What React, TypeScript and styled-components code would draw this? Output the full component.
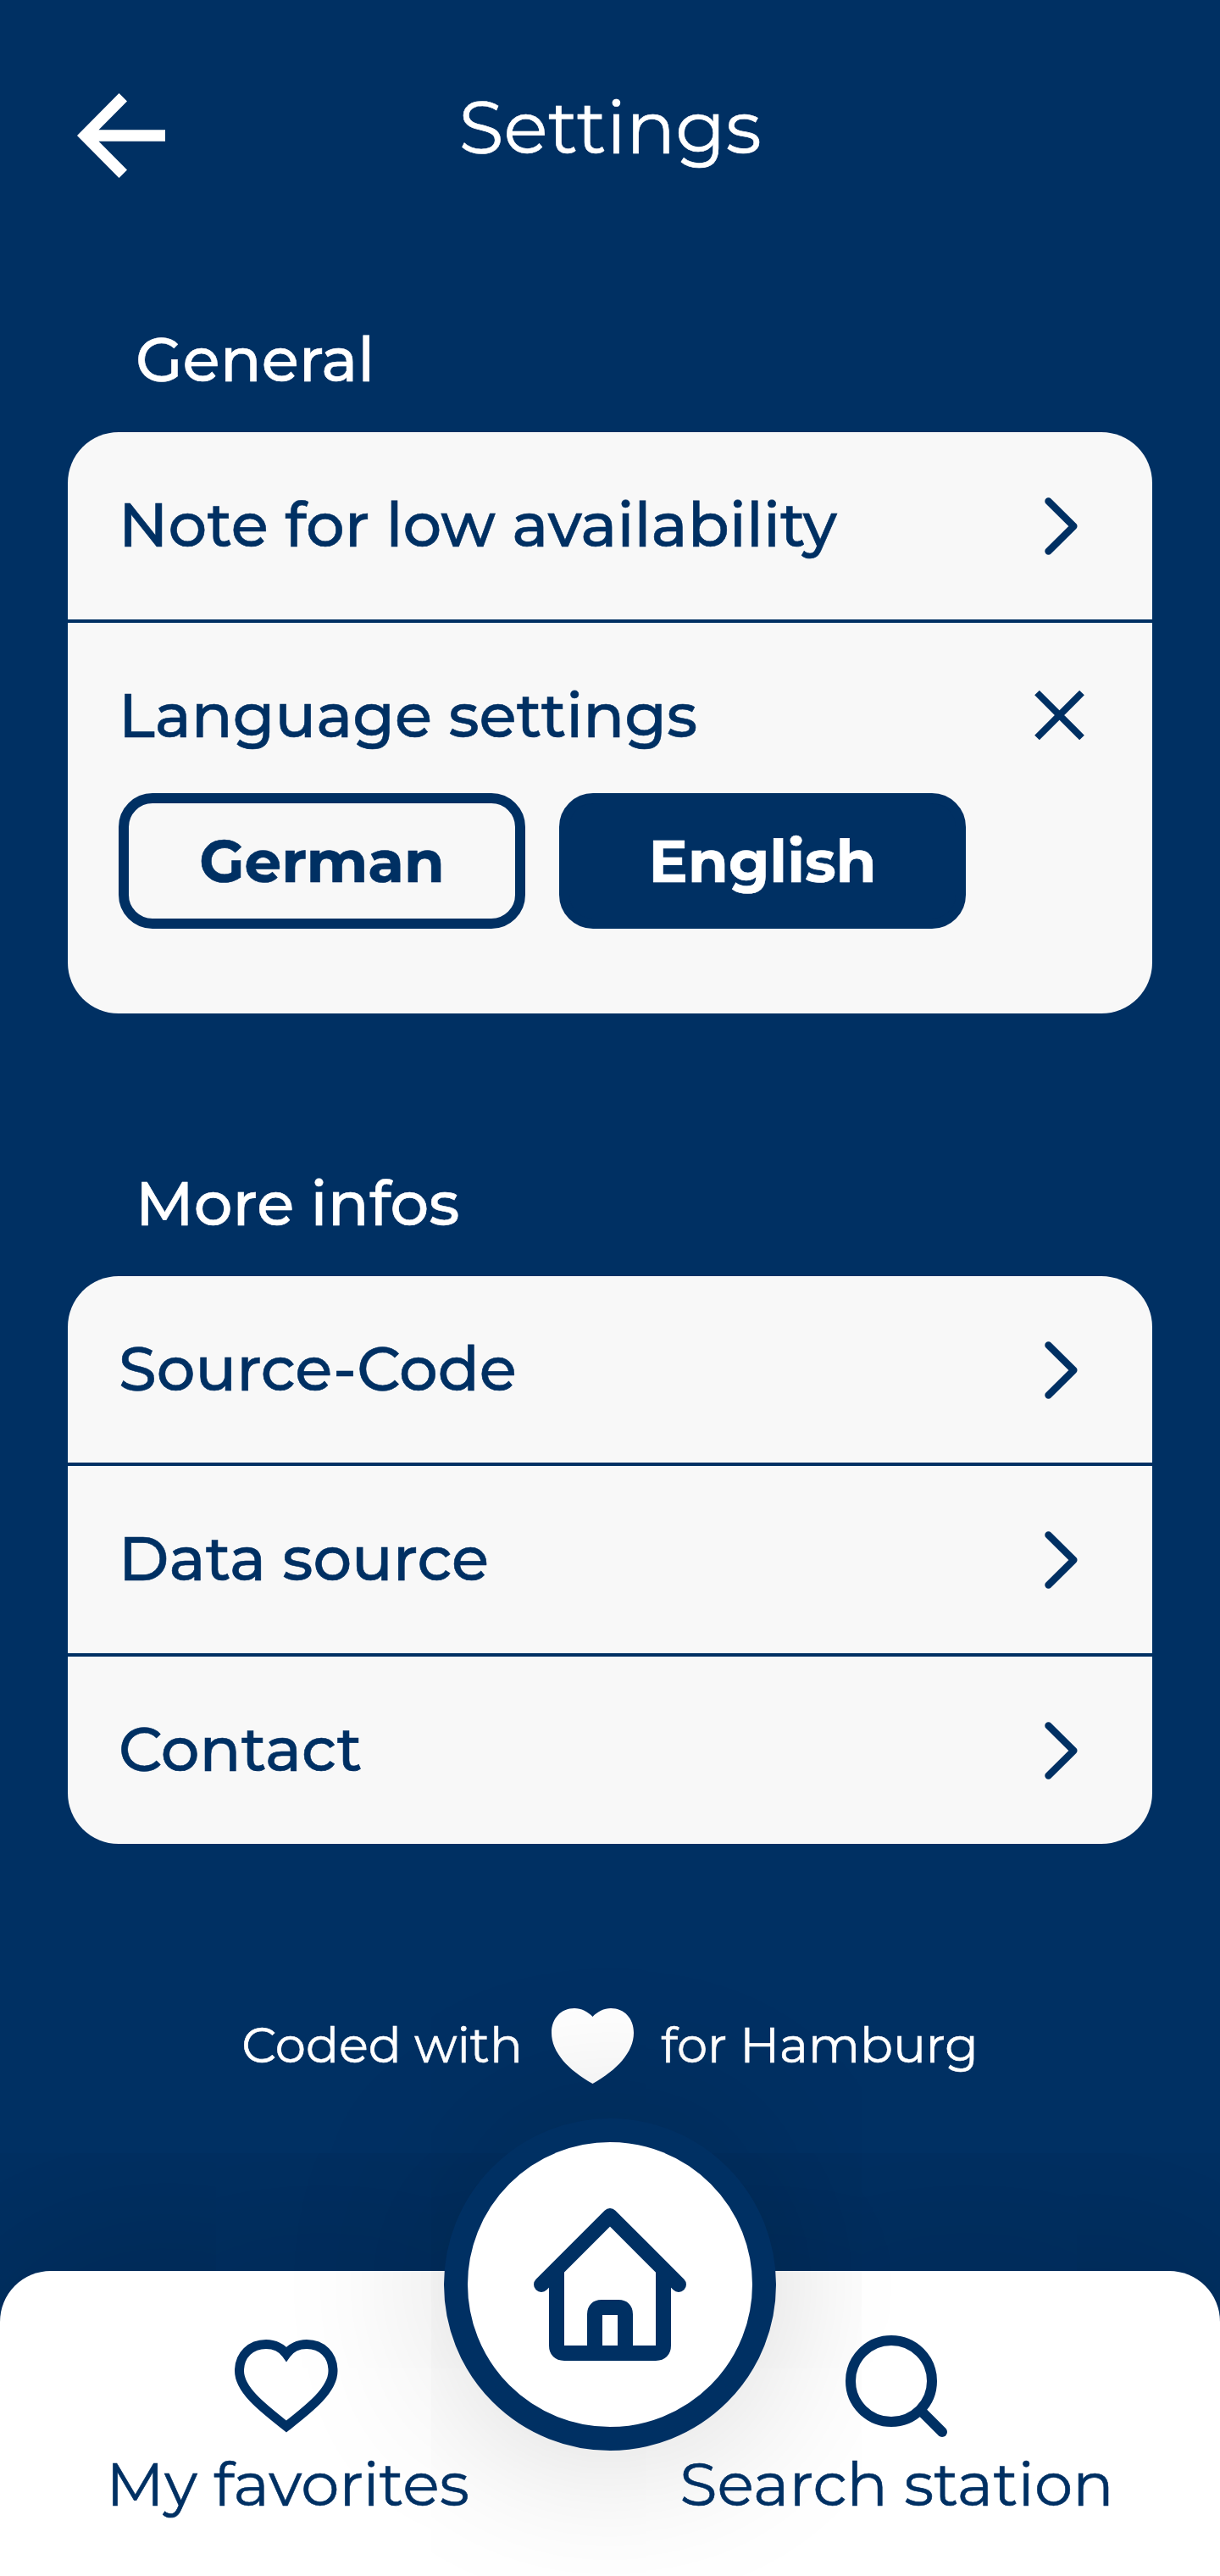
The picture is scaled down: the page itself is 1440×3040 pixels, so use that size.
import React from "react";
import styled, { createGlobalStyle } from "styled-components";

const navy = "#003063";

const GlobalStyle = createGlobalStyle`
  * { box-sizing: border-box; }
  body { margin: 0; background: ${navy}; }
  button { font: inherit; border: 0; padding: 0; margin: 0; background: none; color: inherit; cursor: pointer; }
`;

const Screen = styled.main`
  width: 1440px;
  height: 3040px;
  background: ${navy};
  color: #fff;
  font-family: "Montserrat", "Inter", "Liberation Sans", sans-serif;
  -webkit-text-stroke: 0.6px;
  display: flex;
  flex-direction: column;
  overflow: hidden;
`;

const Header = styled.header`
  height: 320px;
  padding: 0 91px;
  display: grid;
  grid-template-columns: 104px 1fr 104px;
  align-items: center;
`;

const Icon = styled.svg`
  display: block;
  flex: none;
`;

const Title = styled.h1`
  margin: -20px 0 0;
  text-align: center;
  font-size: 86.4px;
  line-height: 100px;
  font-weight: 400;
`;

const Section = styled.section<{ $gap: number }>`
  padding: 0 80px;
  margin-bottom: ${(p) => p.$gap}px;
`;

const SectionTitle = styled.h2`
  margin: 0;
  height: 190px;
  padding: 59px 0 0 80px;
  font-size: 72px;
  line-height: 90px;
  font-weight: 500;
`;

const Card = styled.div`
  background: #f8f8f8;
  color: ${navy};
  border-radius: 60px;
  overflow: hidden;
`;

const Item = styled.div<{ $divided?: boolean; $height: number }>`
  height: ${(p) => p.$height}px;
  border-bottom: ${(p) => (p.$divided ? `4px solid ${navy}` : "0")};
`;

const ItemRow = styled.button`
  width: 100%;
  height: 221px;
  padding: 0 80px 0 60px;
  display: flex;
  align-items: center;
  justify-content: space-between;
`;

const Label = styled.span`
  margin-bottom: 3px;
  font-size: 72px;
  line-height: 90px;
  font-weight: 500;
  white-space: nowrap;
`;

const CrossIcon = styled(Icon)`
  margin-bottom: 3px;
`;

const Languages = styled.div`
  display: flex;
  gap: 40px;
  padding: 0 60px;
  margin-top: -20.5px;
`;

const LanguageButton = styled.button<{ $active?: boolean }>`
  width: 480px;
  height: 160px;
  border: 12px solid ${navy};
  border-radius: 40px;
  background: ${(p) => (p.$active ? navy : "transparent")};
  color: ${(p) => (p.$active ? "#fff" : navy)};
  font-size: 69.12px;
  font-weight: 700;
  text-align: center;
`;

const Credit = styled.p`
  margin: 0;
  height: 90px;
  display: flex;
  align-items: center;
  justify-content: center;
  gap: 32px;
  font-size: 57.6px;
  line-height: 70px;
`;

const CreditText = styled.span`
  white-space: nowrap;
  margin-top: -4px;
`;

const CreditHeart = styled(Icon)`
  margin-left: 2px;
`;

const Nav = styled.nav`
  position: relative;
  margin-top: auto;
  height: 360px;
  flex: none;
  padding: 0 80px;
  display: grid;
  grid-template-columns: 1fr 1fr;
  background: #fff;
  color: ${navy};
  border-radius: 60px 60px 0 0;
  box-shadow: 0 0 300px rgba(0, 0, 0, 0.24);
`;

const NavItem = styled.button<{ $shift: number }>`
  position: relative;
  z-index: 1;
  display: flex;
  flex-direction: column;
  align-items: center;
  padding-top: 70px;
  && {
    margin-left: ${(p) => p.$shift}px;
  }
`;

const NavIcon = styled(Icon)<{ $nudge: number }>`
  margin-right: ${(p) => p.$nudge}px;
  overflow: visible;
`;

const NavLabel = styled.span`
  margin-top: 14px;
  font-size: 72px;
  line-height: 90px;
  white-space: nowrap;
`;

const HomeButton = styled.button`
  && {
    position: absolute;
    left: 524px;
    top: -180px;
    width: 392px;
    height: 392px;
    border: 28px solid ${navy};
    border-radius: 50%;
    background: #fff;
    display: flex;
    justify-content: center;
    align-items: flex-start;
    padding-top: 78px;
    box-shadow: 0 0 200px rgba(0, 0, 0, 0.18);
  }
`;

const Chevron = () => (
  <Icon width="60" height="76" viewBox="0 0 60 76" fill="none" stroke={navy} strokeWidth="8.5" strokeLinecap="round" strokeLinejoin="round">
    <path d="M17.5 8.5 47.3 38 17.5 67.5" />
  </Icon>
);

const Cross = () => (
  <CrossIcon width="60" height="60" viewBox="0 0 60 60" stroke={navy} strokeWidth="8">
    <path d="M4 3.500 57 56.500M57 3.500 4 56.500" />
  </CrossIcon>
);

type Row = { label: string; height: number };

const infoRows: Row[] = [
  { label: "Source-Code", height: 224 },
  { label: "Data source", height: 225 },
  { label: "Contact", height: 221 },
];

export default function App() {
  return (
    <>
      <GlobalStyle />
      <Screen>
        <Header>
          <button aria-label="Back">
            <Icon width="104" height="100" viewBox="0 0 104 100" fill="#fff">
              <path d="M0 50 49.500 0 59 9.500 25.500 43.200H104V56.800H25.500L59 90.500 49.500 100Z" />
            </Icon>
          </button>
          <Title>Settings</Title>
        </Header>

        <Section $gap={120}>
          <SectionTitle>General</SectionTitle>
          <Card>
            <Item $divided $height={225}>
              <ItemRow>
                <Label>Note for low availability</Label>
                <Chevron />
              </ItemRow>
            </Item>
            <Item $height={461}>
              <ItemRow>
                <Label>Language settings</Label>
                <Cross />
              </ItemRow>
              <Languages>
                <LanguageButton>German</LanguageButton>
                <LanguageButton $active>English</LanguageButton>
              </Languages>
            </Item>
          </Card>
        </Section>

        <Section $gap={194}>
          <SectionTitle>More infos</SectionTitle>
          <Card>
            {infoRows.map((row, i) => (
              <Item key={row.label} $divided={i < infoRows.length - 1} $height={row.height}>
                <ItemRow>
                  <Label>{row.label}</Label>
                  <Chevron />
                </ItemRow>
              </Item>
            ))}
          </Card>
        </Section>

        <Credit>
          <CreditText>Coded with</CreditText>
          <CreditHeart width="97" height="90" viewBox="0 0 97 90" fill="#fff">
            <path d="M48.500 89C20 73 0 52 0 29C0 12 11 0 27 0C35 0 43 4 48.500 10C54 4 62 0 70 0C86 0 97 12 97 29C97 52 77 73 48.500 89Z" />
          </CreditHeart>
          <CreditText>for Hamburg</CreditText>
        </Credit>

        <Nav>
          <NavItem $shift={-121}>
            <NavIcon $nudge={3} width="122" height="122" viewBox="277 2750 122 122" fill="none" stroke={navy} strokeWidth="11">
              <path d="M338 2863.500C312 2843 282.500 2821 282.500 2798C282.500 2779 296 2766.500 314 2766.500C324 2766.500 333 2771 338 2778C343 2771 352 2766.500 362 2766.500C380 2766.500 393 2779 393 2798C393 2821 364 2843 338 2863.500Z" />
            </NavIcon>
            <NavLabel>My favorites</NavLabel>
          </NavItem>
          <NavItem $shift={37}>
            <NavIcon $nudge={2} width="122" height="122" viewBox="997 2750 122 122" fill="none" stroke={navy} strokeWidth="12" strokeLinecap="round">
              <circle cx="1052" cy="2810" r="48" />
              <path d="M1087 2845 1112 2870" />
            </NavIcon>
            <NavLabel>Search station</NavLabel>
          </NavItem>
          <HomeButton aria-label="Home">
            <Icon width="180" height="180" viewBox="630 2606 180 180" fill="none" stroke={navy} strokeWidth="18" strokeLinecap="round" strokeLinejoin="round">
              <path d="M639 2696 720 2615 801 2696" />
              <path d="M657 2680V2768Q657 2777 666 2777H774Q783 2777 783 2768V2680" strokeLinecap="butt" />
              <path d="M702 2777V2731Q702 2723 710 2723H730Q738 2723 738 2731V2777" strokeLinecap="butt" />
            </Icon>
          </HomeButton>
        </Nav>
      </Screen>
    </>
  );
}
